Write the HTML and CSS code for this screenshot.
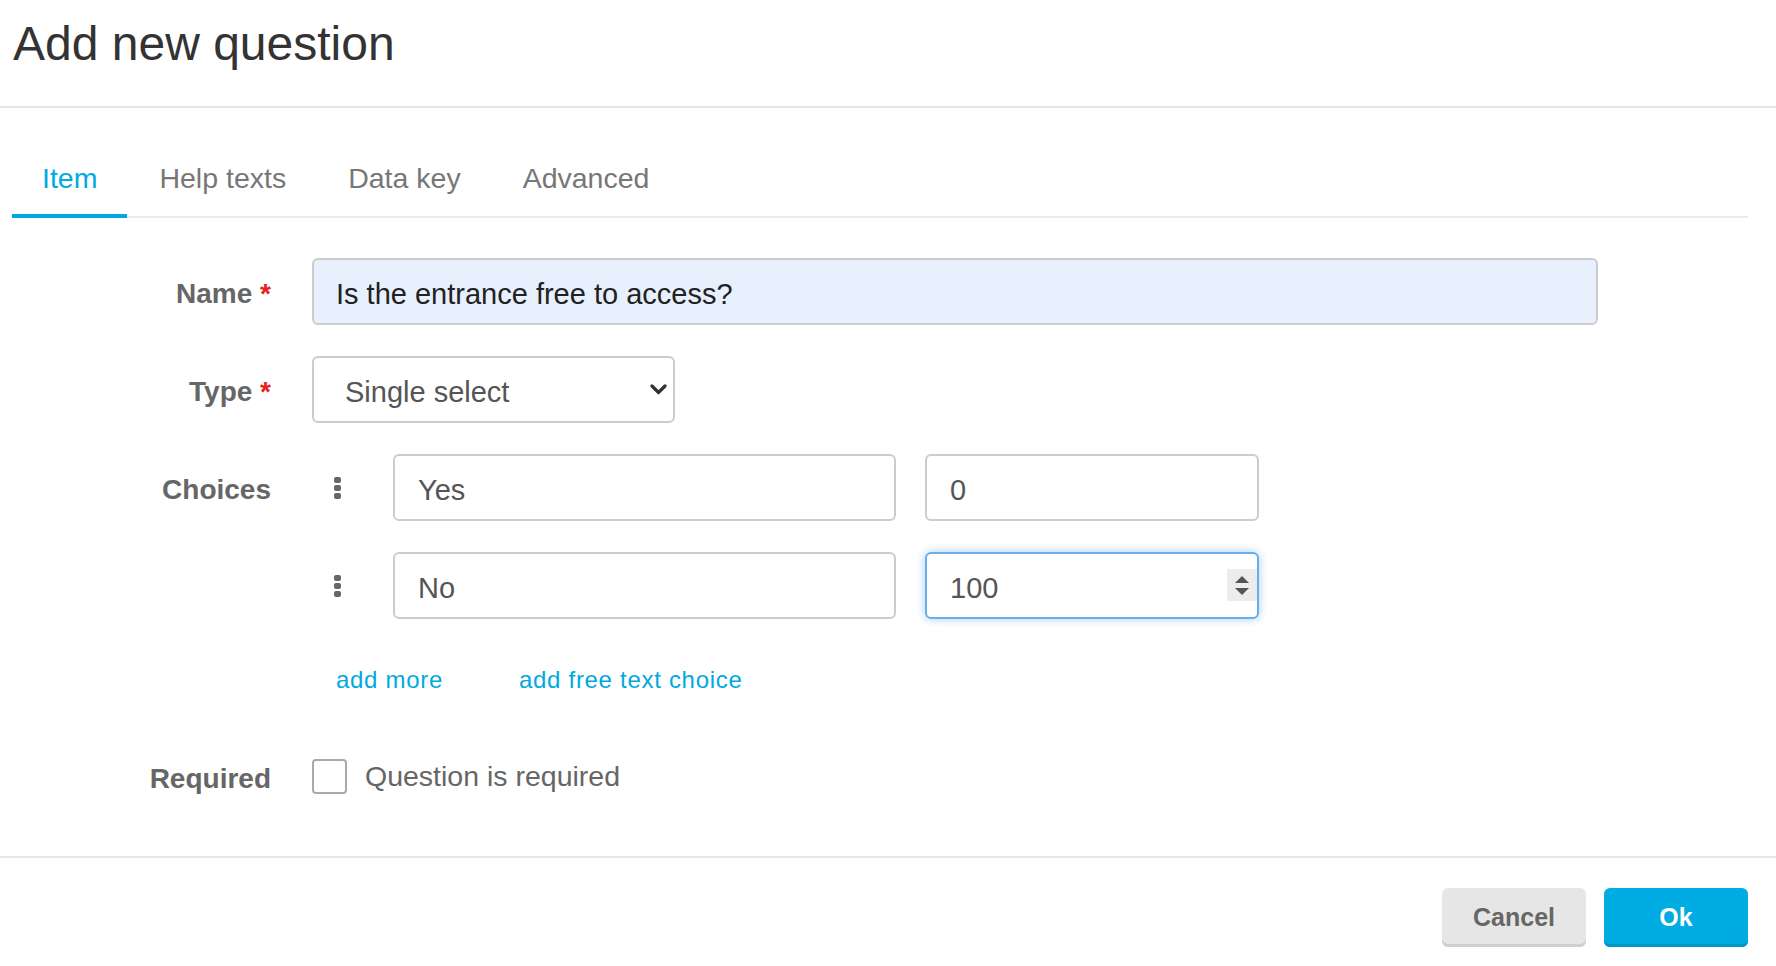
FILE: index.html
```html
<!DOCTYPE html>
<html lang="en">
<head>
<meta charset="utf-8">
<title>Add new question</title>
<link rel="stylesheet" href="styles.css">
</head>
<body>
<div class="modal">
  <header class="modal-header">
    <h1 class="title">Add new question</h1>
  </header>
  <nav class="tabs">
    <a class="tab active">Item</a>
    <a class="tab">Help texts</a>
    <a class="tab">Data key</a>
    <a class="tab">Advanced</a>
  </nav>
  <form class="form">
    <div class="row">
      <label class="label">Name <span class="req">*</span></label>
      <input class="input input-name" type="text" value="Is the entrance free to access?">
    </div>
    <div class="row">
      <label class="label">Type <span class="req">*</span></label>
      <div class="select-wrap">
        <select class="select"><option>Single select</option></select>
        <svg class="chevron" width="17" height="11" viewBox="0 0 17 11"><path d="M2 2 L8.5 8.5 L15 2" fill="none" stroke="#333" stroke-width="3.2" stroke-linecap="round" stroke-linejoin="round"/></svg>
      </div>
    </div>
    <div class="row row-top row-choices">
      <label class="label">Choices</label>
      <div class="choices">
        <div class="choice">
          <span class="handle"><i></i><i></i><i></i></span>
          <input class="input input-choice" type="text" value="Yes">
          <div class="value-wrap"><input class="input input-value" type="text" value="0"></div>
        </div>
        <div class="choice">
          <span class="handle"><i></i><i></i><i></i></span>
          <input class="input input-choice" type="text" value="No">
          <div class="value-wrap">
            <input class="input input-value input-focus" type="text" value="100">
            <span class="spinner"><span class="tri-up"></span><span class="tri-down"></span></span>
          </div>
        </div>
        <div class="links">
          <a class="link">add more</a>
          <a class="link">add free text choice</a>
        </div>
      </div>
    </div>
    <div class="row">
      <label class="label">Required</label>
      <label class="check"><span class="box"></span><span class="check-text">Question is required</span></label>
    </div>
  </form>
  <footer class="modal-footer">
    <button class="btn btn-cancel" type="button">Cancel</button>
    <button class="btn btn-ok" type="button">Ok</button>
  </footer>
</div>
</body>
</html>
```
FILE: styles.css
```css
html, body {
  margin: 0;
  padding: 0;
  background: #fff;
  font-family: "Liberation Sans", Arial, sans-serif;
}

.modal-header {
  padding: 16px 13px 34px;
  border-bottom: 2px solid #e6e6e6;
}

.title {
  margin: 0;
  font-size: 48px;
  line-height: 56px;
  font-weight: 400;
  color: #333;
}

.tabs {
  display: flex;
  margin: 50px 28px 0 12px;
  border-bottom: 2px solid #ebebeb;
}

.tab {
  padding: 0 30px 16px;
  margin-right: 2px;
  margin-bottom: -2px;
  font-size: 28.5px;
  line-height: 40px;
  color: #777;
  border-bottom: 4px solid transparent;
}

.tab.active {
  color: #00a9e0;
  border-bottom-color: #00a9e0;
}

.form {
  display: flex;
  flex-direction: column;
  margin: 40px 0 0;
  padding-bottom: 46.5px;
}

.row {
  display: flex;
  align-items: center;
  margin-bottom: 31px;
}

.row:last-child {
  margin-bottom: 0;
}

.row-top {
  align-items: flex-start;
}

.row-choices {
  margin-bottom: 47.5px;
}

.label {
  box-sizing: border-box;
  flex-shrink: 0;
  width: 271px;
  margin-right: 41px;
  height: 67px;
  padding-top: 2px;
  line-height: 67px;
  text-align: right;
  font-weight: 700;
  font-size: 28px;
  color: #666;
}

.req {
  color: #e2231a;
}

.input {
  box-sizing: border-box;
  height: 67px;
  border: 2px solid #ccc;
  border-radius: 6px;
  padding: 5px 23px 0;
  font-family: "Liberation Sans", Arial, sans-serif;
  font-size: 29px;
  color: #555;
  background: #fff;
  outline: none;
  margin: 0;
}

.input-name {
  width: 1286px;
  padding-left: 22px;
  background: #e8f0fe;
  color: #222;
}

.select-wrap {
  position: relative;
}

.select {
  box-sizing: border-box;
  width: 363px;
  height: 67px;
  border: 2px solid #ccc;
  border-radius: 6px;
  padding: 5px 40px 0 31px;
  font-family: "Liberation Sans", Arial, sans-serif;
  font-size: 29px;
  color: #555;
  background: #fff;
  appearance: none;
  -webkit-appearance: none;
  outline: none;
  margin: 0;
}

.chevron {
  position: absolute;
  right: 8px;
  top: 28px;
  pointer-events: none;
}

.choices {
  display: flex;
  flex-direction: column;
}

.choice {
  display: flex;
  align-items: center;
}

.choice + .choice {
  margin-top: 31px;
}

.handle {
  width: 51px;
  margin-right: 30px;
  display: flex;
  flex-direction: column;
  align-items: center;
  gap: 2px;
}

.handle i {
  display: block;
  width: 6.5px;
  height: 6px;
  border-radius: 2px;
  background: #666;
}

.input-choice {
  width: 503px;
  margin-right: 29px;
}

.value-wrap {
  position: relative;
}

.input-value {
  width: 334px;
}

.input-focus {
  border-color: #66afe9;
  box-shadow: 0 0 10px rgba(102, 175, 233, 0.6);
}

.spinner {
  position: absolute;
  right: 2px;
  top: 17px;
  width: 30px;
  height: 32px;
  background: #ececec;
  display: flex;
  flex-direction: column;
  align-items: center;
  justify-content: center;
  gap: 5px;
}

.tri-up {
  width: 0;
  height: 0;
  border-left: 7px solid transparent;
  border-right: 7px solid transparent;
  border-bottom: 7.5px solid #555;
}

.tri-down {
  width: 0;
  height: 0;
  border-left: 7px solid transparent;
  border-right: 7px solid transparent;
  border-top: 7.5px solid #555;
}

.links {
  display: flex;
  margin-top: 46px;
  padding-left: 24px;
  font-size: 24px;
  line-height: 30px;
  letter-spacing: 0.7px;
}

.link {
  color: #00a9e0;
  text-decoration: none;
}

.link + .link {
  margin-left: 76px;
}

.check {
  display: flex;
  align-items: center;
  height: 67px;
}

.box {
  box-sizing: border-box;
  width: 35px;
  height: 35px;
  border: 2px solid #aaa;
  border-radius: 4px;
  background: #fff;
  margin-right: 18px;
}

.check-text {
  font-size: 28.5px;
  color: #666;
}

.modal-footer {
  display: flex;
  justify-content: flex-end;
  gap: 18px;
  padding: 30px 28px 19px;
  border-top: 2px solid #e6e6e6;
}

.btn {
  box-sizing: border-box;
  width: 144px;
  height: 59px;
  border: 0;
  border-radius: 6px;
  font-family: "Liberation Sans", Arial, sans-serif;
  font-weight: 700;
  font-size: 25px;
  padding: 0;
  cursor: pointer;
}

.btn-cancel {
  background: #e6e6e6;
  color: #666;
  box-shadow: inset 0 -3px 0 #cfcfcf;
}

.btn-ok {
  background: #00ace2;
  color: #fff;
  box-shadow: inset 0 -3px 0 #0097c9;
}
```
